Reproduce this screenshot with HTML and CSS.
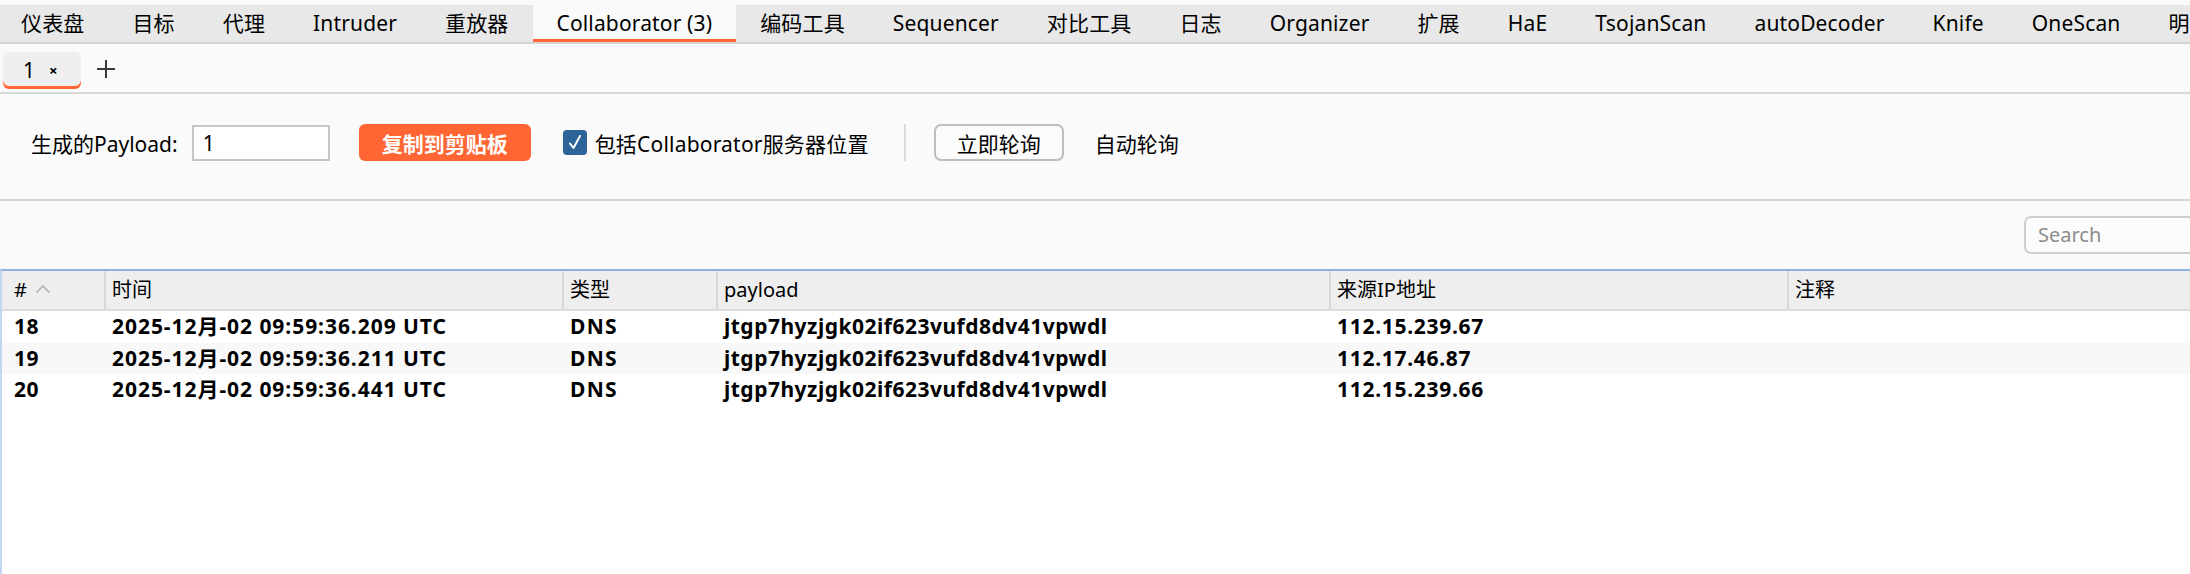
FILE: index.html
```html
<!DOCTYPE html>
<html lang="zh-CN">
<head>
<meta charset="utf-8">
<title>Collaborator</title>
<link rel="stylesheet" href="styles.css">
</head>
<body>
<div class="app">
  <div class="tabbar">
    <div class="tab">仪表盘</div>
    <div class="tab">目标</div>
    <div class="tab">代理</div>
    <div class="tab">Intruder</div>
    <div class="tab">重放器</div>
    <div class="tab active">Collaborator (3)</div>
    <div class="tab">编码工具</div>
    <div class="tab">Sequencer</div>
    <div class="tab">对比工具</div>
    <div class="tab">日志</div>
    <div class="tab">Organizer</div>
    <div class="tab">扩展</div>
    <div class="tab">HaE</div>
    <div class="tab">TsojanScan</div>
    <div class="tab">autoDecoder</div>
    <div class="tab">Knife</div>
    <div class="tab">OneScan</div>
    <div class="tab">明文</div>
  </div>

  <div class="subtabs">
    <div class="subtab"><span class="subtab-num">1</span><span class="subtab-close">×</span></div>
    <div class="add">
      <svg width="22" height="22" viewBox="0 0 22 22"><path d="M11 2V20M2 11H20" stroke="#3a3a3a" stroke-width="2" fill="none"/></svg>
    </div>
  </div>

  <div class="controls">
    <span class="lbl">生成的Payload:</span>
    <div class="field">1</div>
    <button class="btn-primary">复制到剪贴板</button>
    <div class="check">
      <svg width="24" height="25" viewBox="0 0 24 25"><rect x="0" y="0" width="24" height="25" rx="4" fill="#2c6399"/><path d="M7 13.5L10.5 18L17 6" stroke="#fff" stroke-width="2" fill="none" stroke-linecap="round" stroke-linejoin="round"/></svg>
    </div>
    <span class="check-label">包括Collaborator服务器位置</span>
    <div class="sep"></div>
    <button class="btn">立即轮询</button>
    <span class="auto">自动轮询</span>
  </div>

  <div class="searchrow">
    <div class="search">Search</div>
  </div>

  <div class="table">
    <div class="row head">
      <div class="cell c1"><span>#</span><svg class="sort" width="16" height="10" viewBox="0 0 16 10"><path d="M1.5 8.5L8 2L14.5 8.5" stroke="#b4b4b4" stroke-width="1.6" fill="none"/></svg></div>
      <div class="cell">时间</div>
      <div class="cell">类型</div>
      <div class="cell">payload</div>
      <div class="cell">来源IP地址</div>
      <div class="cell last">注释</div>
    </div>
    <div class="row data">
      <div class="cell c1 num">18</div>
      <div class="cell time">2025-12月-02 09:59:36.209 UTC</div>
      <div class="cell type">DNS</div>
      <div class="cell pay">jtgp7hyzjgk02if623vufd8dv41vpwdl</div>
      <div class="cell ip">112.15.239.67</div>
      <div class="cell last"></div>
    </div>
    <div class="row data alt">
      <div class="cell c1 num">19</div>
      <div class="cell time">2025-12月-02 09:59:36.211 UTC</div>
      <div class="cell type">DNS</div>
      <div class="cell pay">jtgp7hyzjgk02if623vufd8dv41vpwdl</div>
      <div class="cell ip">112.17.46.87</div>
      <div class="cell last"></div>
    </div>
    <div class="row data">
      <div class="cell c1 num">20</div>
      <div class="cell time">2025-12月-02 09:59:36.441 UTC</div>
      <div class="cell type">DNS</div>
      <div class="cell pay">jtgp7hyzjgk02if623vufd8dv41vpwdl</div>
      <div class="cell ip">112.15.239.66</div>
      <div class="cell last"></div>
    </div>
  </div>
</div>
</body>
</html>
```

FILE: styles.css
```css
* { box-sizing: border-box; }

html, body {
  margin: 0;
  padding: 0;
}

body {
  width: 2190px;
  height: 574px;
  overflow: hidden;
  background: #fafafa;
  color: #000;
  font-family: "Noto Sans", "Noto Sans CJK SC", sans-serif;
  font-size: 21px;
}

.app {
  height: 574px;
  display: flex;
  flex-direction: column;
  padding-top: 5px;
}

/* top tab bar */
.tabbar {
  display: flex;
  height: 39px;
  background: #e8e8e8;
  border-bottom: 2px solid #d4d4d4;
  overflow: hidden;
  flex: none;
  margin-left: -3px;
}

.tab {
  flex: none;
  padding: 0 24px;
  line-height: 37px;
  white-space: nowrap;
  letter-spacing: 0.15px;
}

.tab.active {
  background: #fafafa;
  box-shadow: inset 0 -3px 0 #ff6633;
}

/* sub tabs */
.subtabs {
  flex: none;
  height: 50px;
  display: flex;
  align-items: flex-end;
  padding: 0 0 3px 3px;
  gap: 14px;
  border-bottom: 2px solid #d8d8d8;
}

.subtab {
  height: 37px;
  display: flex;
  align-items: center;
  gap: 14px;
  padding: 0 23px 0 20px;
  background: #efefef;
  border-radius: 6px;
  box-shadow: inset 0 -3px 0 #ff6633;
}

.subtab-num { line-height: 1; }

.subtab-close {
  font-size: 15px;
  font-weight: 700;
  line-height: 1;
}

.add {
  display: flex;
  align-items: center;
  height: 37px;
  padding-bottom: 4px;
}

/* controls */
.controls {
  flex: none;
  height: 107px;
  display: flex;
  align-items: center;
  padding: 0 0 8px 31px;
  border-bottom: 2px solid #d8d8d8;
}

.lbl { margin-right: 14px; }

.field {
  width: 138px;
  height: 36px;
  background: #fff;
  border: 2px solid #c6c6c6;
  padding-left: 9px;
  line-height: 32px;
  margin-right: 29px;
}

.btn-primary {
  width: 172px;
  height: 37px;
  border: none;
  border-radius: 6px;
  background: #ff6633;
  color: #fff;
  font-family: "Noto Sans CJK SC", sans-serif;
  font-weight: 700;
  font-size: 21px;
  padding: 0;
  margin-right: 32px;
}

.check {
  display: flex;
  margin-right: 8px;
}

.check-label { letter-spacing: 0.2px; }

.sep {
  width: 2px;
  height: 37px;
  background: #dadada;
  margin: 0 28px 0 35px;
}

.btn {
  width: 130px;
  height: 37px;
  border: 2px solid #bdbdbd;
  border-radius: 7px;
  background: #fbfbfb;
  color: #000;
  font-family: "Noto Sans CJK SC", sans-serif;
  font-size: 21px;
  padding: 0;
  margin-right: 31px;
}

/* search */
.searchrow {
  flex: none;
  height: 68px;
  display: flex;
  justify-content: flex-end;
  align-items: center;
  overflow: hidden;
}

.search {
  width: 200px;
  height: 38px;
  margin-right: -34px;
  border: 2px solid #cfcfcf;
  border-radius: 7px;
  background: #fcfcfc;
  color: #8c8c8c;
  padding-left: 12px;
  line-height: 34px;
  font-size: 20px;
}

/* table */
.table {
  flex: 1;
  background: #fff;
  border-top: 2px solid #8cb2dc;
  border-left: 2px solid #c2d8f0;
}

.row {
  display: grid;
  grid-template-columns: 104px 458px 154px 613px 458px 1fr;
}

.row.head {
  height: 40px;
  background: #eeeeee;
  border-bottom: 2px solid #dcdcdc;
  font-size: 20px;
}

.row.head .cell {
  border-right: 2px solid #d8d8d8;
  line-height: 38px;
}

.row.head .cell.last { border-right: none; }

.cell {
  padding-left: 6px;
  white-space: nowrap;
  overflow: hidden;
}

.cell.c1 {
  padding-left: 12px;
  display: flex;
  align-items: center;
  gap: 8px;
}

.sort { margin-top: -2px; }

.row.data {
  height: 31.5px;
  line-height: 31.5px;
  font-weight: 700;
}

.row.data .cell.c1 { display: block; }

.num { letter-spacing: 0.6px; }
.time { letter-spacing: 0.95px; }
.type { letter-spacing: 1.3px; }
.pay { letter-spacing: 0.5px; }
.ip { letter-spacing: 0.7px; }

.row.alt { background: #f8f8f8; }
```
